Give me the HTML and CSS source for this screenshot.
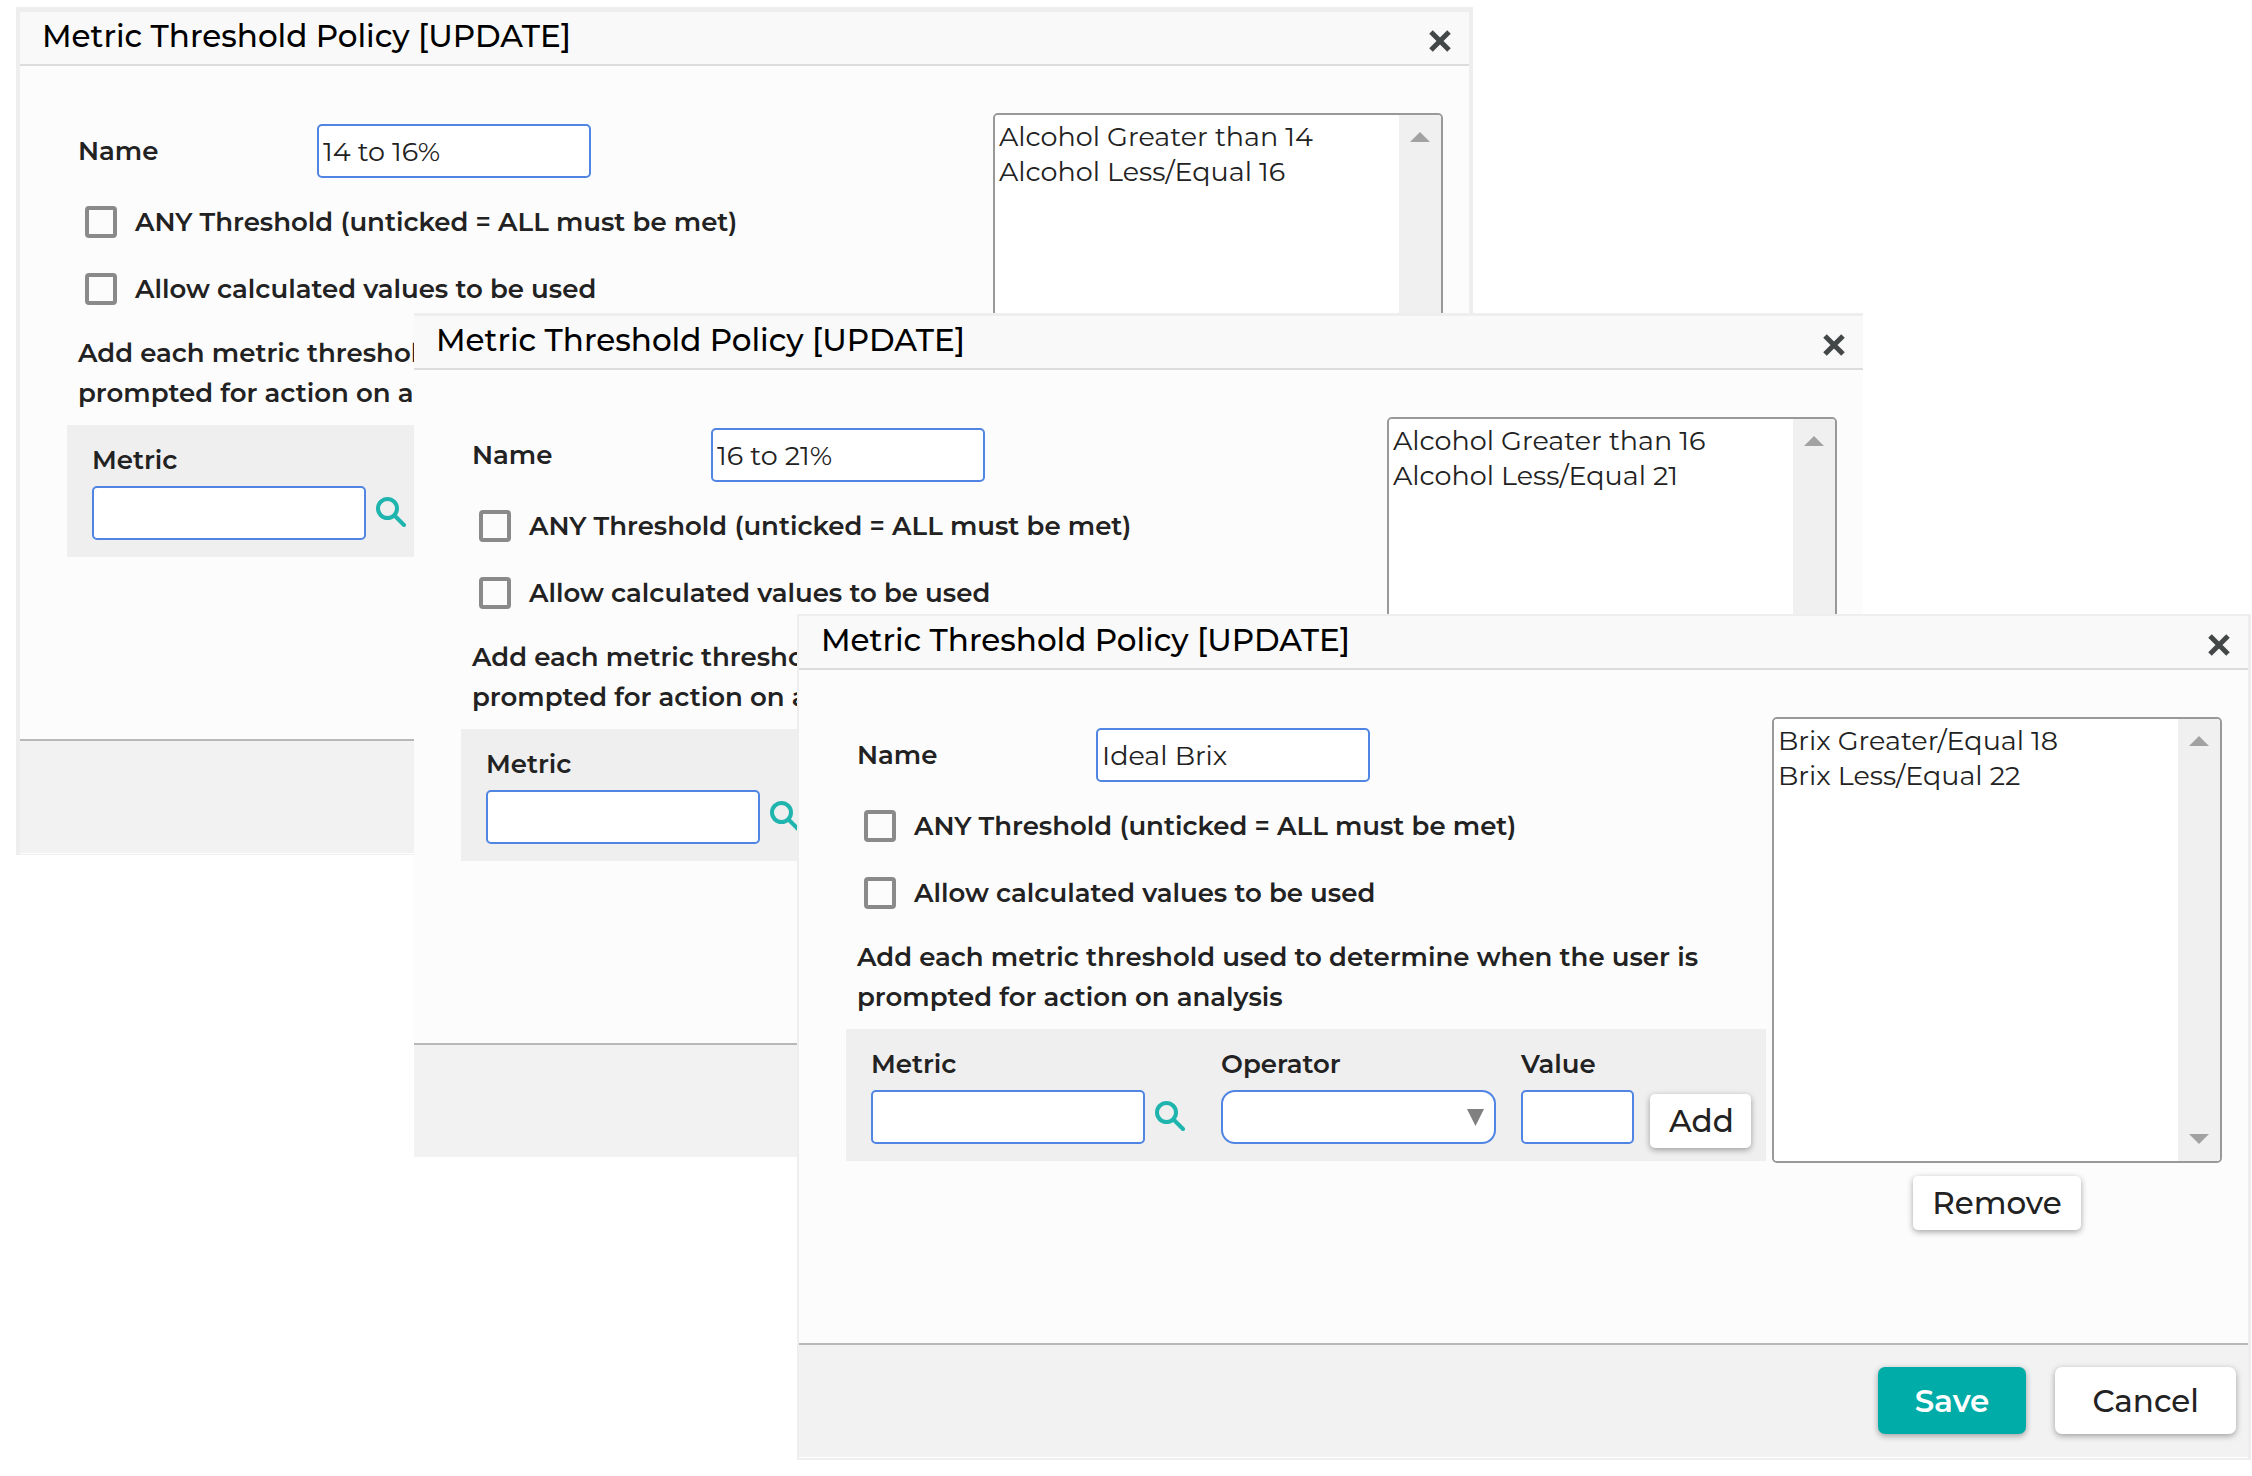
FILE: index.html
```html
<!DOCTYPE html>
<html lang="en">
<head>
  <meta charset="UTF-8" />
  <meta name="viewport" content="width=device-width, initial-scale=1.0" />
  <title>Metric Threshold Policy</title>
  <link rel="stylesheet" href="styles.css">
</head>
<body>

  <!-- Icons shared by the three dialogs -->
  <svg class="sprite" aria-hidden="true">
    <symbol id="icon-close" viewBox="0 0 24 24">
      <path d="M3 3L21 21M21 3L3 21" fill="none" stroke="#444747" stroke-width="5" />
    </symbol>
    <symbol id="icon-search" viewBox="0 0 30 30">
      <circle cx="11.5" cy="11.5" r="9.5" fill="none" stroke="#1fb5ae" stroke-width="4" />
      <path d="M19 19L28 28" stroke="#1fb5ae" stroke-width="4" stroke-linecap="round" />
    </symbol>
    <symbol id="icon-up" viewBox="0 0 20 10">
      <path d="M0 10L10 0L20 10Z" fill="#a2a2a2" />
    </symbol>
    <symbol id="icon-down" viewBox="0 0 20 10">
      <path d="M0 0L10 10L20 0Z" fill="#a2a2a2" />
    </symbol>
    <symbol id="icon-caret" viewBox="0 0 17 17">
      <path d="M0 0H17L8.5 17Z" fill="#808080" />
    </symbol>
  </svg>

  <form class="dialog dialog-one">
    <div class="dialog-header">
      <h2>Metric Threshold Policy [UPDATE]</h2>
      <button type="button" class="icon-btn close" aria-label="Close"><svg><use href="#icon-close" /></svg></button>
    </div>
    <div class="dialog-body">
      <div class="settings">
        <div class="name-row">
          <label for="name1">Name</label>
          <input type="text" id="name1" value="14 to 16%" />
        </div>
        <label class="check"><input type="checkbox" /> ANY Threshold (unticked = ALL must be met)</label>
        <label class="check"><input type="checkbox" /> Allow calculated values to be used</label>
        <p>Add each metric threshold used to determine when the user is prompted for action on analysis</p>
        <div class="panel">
          <div class="field metric">
            <label for="metric1">Metric</label>
            <div class="lookup">
              <input type="text" id="metric1" />
              <button type="button" class="icon-btn search" aria-label="Search"><svg><use href="#icon-search" /></svg></button>
            </div>
          </div>
          <div class="field operator">
            <label for="operator1">Operator</label>
            <div class="dropdown">
              <select id="operator1"><option></option></select>
              <svg><use href="#icon-caret" /></svg>
            </div>
          </div>
          <div class="field value">
            <label for="value1">Value</label>
            <input type="text" id="value1" />
          </div>
          <button type="button" class="btn">Add</button>
        </div>
      </div>
      <div class="thresholds">
        <div class="listbox">
          <select size="12" aria-label="Thresholds">
            <option>Alcohol Greater than 14</option>
            <option>Alcohol Less/Equal 16</option>
          </select>
          <div class="scrollbar"><svg><use href="#icon-up" /></svg><svg><use href="#icon-down" /></svg></div>
        </div>
        <button type="button" class="btn">Remove</button>
      </div>
    </div>
    <div class="dialog-footer">
      <button type="submit" class="btn large primary">Save</button>
      <button type="button" class="btn large">Cancel</button>
    </div>
  </form>

  <form class="dialog dialog-two">
    <div class="dialog-header">
      <h2>Metric Threshold Policy [UPDATE]</h2>
      <button type="button" class="icon-btn close" aria-label="Close"><svg><use href="#icon-close" /></svg></button>
    </div>
    <div class="dialog-body">
      <div class="settings">
        <div class="name-row">
          <label for="name2">Name</label>
          <input type="text" id="name2" value="16 to 21%" />
        </div>
        <label class="check"><input type="checkbox" /> ANY Threshold (unticked = ALL must be met)</label>
        <label class="check"><input type="checkbox" /> Allow calculated values to be used</label>
        <p>Add each metric threshold used to determine when the user is prompted for action on analysis</p>
        <div class="panel">
          <div class="field metric">
            <label for="metric2">Metric</label>
            <div class="lookup">
              <input type="text" id="metric2" />
              <button type="button" class="icon-btn search" aria-label="Search"><svg><use href="#icon-search" /></svg></button>
            </div>
          </div>
          <div class="field operator">
            <label for="operator2">Operator</label>
            <div class="dropdown">
              <select id="operator2"><option></option></select>
              <svg><use href="#icon-caret" /></svg>
            </div>
          </div>
          <div class="field value">
            <label for="value2">Value</label>
            <input type="text" id="value2" />
          </div>
          <button type="button" class="btn">Add</button>
        </div>
      </div>
      <div class="thresholds">
        <div class="listbox">
          <select size="12" aria-label="Thresholds">
            <option>Alcohol Greater than 16</option>
            <option>Alcohol Less/Equal 21</option>
          </select>
          <div class="scrollbar"><svg><use href="#icon-up" /></svg><svg><use href="#icon-down" /></svg></div>
        </div>
        <button type="button" class="btn">Remove</button>
      </div>
    </div>
    <div class="dialog-footer">
      <button type="submit" class="btn large primary">Save</button>
      <button type="button" class="btn large">Cancel</button>
    </div>
  </form>

  <form class="dialog dialog-three">
    <div class="dialog-header">
      <h2>Metric Threshold Policy [UPDATE]</h2>
      <button type="button" class="icon-btn close" aria-label="Close"><svg><use href="#icon-close" /></svg></button>
    </div>
    <div class="dialog-body">
      <div class="settings">
        <div class="name-row">
          <label for="name3">Name</label>
          <input type="text" id="name3" value="Ideal Brix" />
        </div>
        <label class="check"><input type="checkbox" /> ANY Threshold (unticked = ALL must be met)</label>
        <label class="check"><input type="checkbox" /> Allow calculated values to be used</label>
        <p>Add each metric threshold used to determine when the user is prompted for action on analysis</p>
        <div class="panel">
          <div class="field metric">
            <label for="metric3">Metric</label>
            <div class="lookup">
              <input type="text" id="metric3" />
              <button type="button" class="icon-btn search" aria-label="Search"><svg><use href="#icon-search" /></svg></button>
            </div>
          </div>
          <div class="field operator">
            <label for="operator3">Operator</label>
            <div class="dropdown">
              <select id="operator3"><option></option></select>
              <svg><use href="#icon-caret" /></svg>
            </div>
          </div>
          <div class="field value">
            <label for="value3">Value</label>
            <input type="text" id="value3" />
          </div>
          <button type="button" class="btn">Add</button>
        </div>
      </div>
      <div class="thresholds">
        <div class="listbox">
          <select size="12" aria-label="Thresholds">
            <option>Brix Greater/Equal 18</option>
            <option>Brix Less/Equal 22</option>
          </select>
          <div class="scrollbar"><svg><use href="#icon-up" /></svg><svg><use href="#icon-down" /></svg></div>
        </div>
        <button type="button" class="btn">Remove</button>
      </div>
    </div>
    <div class="dialog-footer">
      <button type="submit" class="btn large primary">Save</button>
      <button type="button" class="btn large">Cancel</button>
    </div>
  </form>

</body>
</html>
```

FILE: styles.css
```css
* {
  box-sizing: border-box;
}
body {
  margin: 0;
  background-color: #fff;
  color: #222;
  font-family: Montserrat, Inter, sans-serif;
  font-size: 26px;
  font-weight: 600;
}
input, select, button {
  font-family: inherit;
  font-size: 27px;
  color: inherit;
  margin: 0;
}
.sprite {
  display: none;
}

/* Overlapping windows */
.dialog {
  position: absolute;
  border: 0 solid #eee;
  background-color: #fff;
}
.dialog-one {
  top: 7px;
  left: 16px;
  right: 779px;
  border-width: 5px 4px 1px;
  padding-bottom: 1px;
}
.dialog-two {
  top: 313px;
  left: 414px;
  right: 389px;
  border-top-width: 3px;
}
.dialog-three {
  top: 614px;
  left: 797px;
  right: 1px;
  border-width: 2px 3px 2px 2px;
  padding-bottom: 1px;
}
.dialog-header {
  display: flex;
  align-items: center;
  justify-content: space-between;
  padding: 0 17px 0 22px;
  background-color: #f9f9f9;
  border-bottom: 2px solid #dcdcdc;
}
.dialog-header h2 {
  margin: 0;
  padding-bottom: 4px;
  color: #000;
  font-size: 31px;
  font-weight: 500;
  line-height: 48px;
}
.dialog-body {
  display: flex;
  gap: 6px;
  padding: 47px 26px 113px 47px;
  background-color: #fcfcfc;
}
.dialog-footer {
  display: flex;
  justify-content: flex-end;
  gap: 29px;
  padding: 22px 12px 23px;
  background-color: #f2f2f2;
  border-top: 2px solid #b8b8b8;
}

/* Left column */
.settings {
  flex: 1;
  padding-top: 11px;
}
.name-row {
  display: flex;
  align-items: center;
  padding-left: 11px;
  margin-bottom: 10px;
}
.name-row label {
  width: 239px;
}
input[type="text"] {
  width: 274px;
  height: 54px;
  padding: 0 4px;
  border: 2px solid #5085e4;
  border-radius: 5px;
  background-color: #fff;
}
.check {
  display: flex;
  align-items: center;
  gap: 18px;
  height: 67px;
  padding-left: 18px;
}
.check input {
  appearance: none;
  width: 32px;
  height: 32px;
  border: 4px solid #8a8a8a;
  border-radius: 4px;
}
.settings p {
  margin: 11px 11px 12px;
  line-height: 40px;
}
.panel {
  display: flex;
  align-items: flex-end;
  padding: 18px 15px 17px 25px;
  background-color: #efefef;
}
.panel .btn {
  width: 101px;
  margin-bottom: -4px;
}
.field label {
  display: block;
  margin-bottom: 9px;
  line-height: 34px;
}
.metric {
  flex: 1;
  margin-right: 36px;
}
.operator {
  width: 275px;
  margin-right: 25px;
}
.value {
  width: 113px;
  margin-right: 16px;
}
.field input[type="text"] {
  display: block;
  width: 100%;
}
.lookup {
  display: flex;
  gap: 10px;
}
.dropdown {
  position: relative;
}
.dropdown select {
  appearance: none;
  display: block;
  width: 100%;
  height: 54px;
  padding: 0 40px 0 10px;
  border: 2px solid #5085e4;
  border-radius: 14px;
  background-color: #fff;
}
.dropdown svg {
  position: absolute;
  top: 19px;
  right: 12px;
  width: 17px;
  height: 17px;
  pointer-events: none;
}

/* Right column */
.thresholds {
  display: flex;
  flex-direction: column;
  align-items: center;
  gap: 13px;
  width: 450px;
}
.listbox {
  display: flex;
  width: 100%;
  height: 446px;
  border: 2px solid #999;
  border-radius: 5px;
  background-color: #fff;
  overflow: hidden;
}
.listbox select {
  flex: 1;
  padding: 5px 0;
  border: none;
  background-color: #fff;
  overflow: hidden;
  font-weight: 500;
}
.listbox option {
  min-height: 35px;
  padding: 0 4px;
  line-height: 35px;
}
.scrollbar {
  display: flex;
  flex-direction: column;
  align-items: center;
  justify-content: space-between;
  width: 42px;
  padding: 17px 0;
  background-color: #f0f0f0;
}
.scrollbar svg {
  width: 20px;
  height: 10px;
}

/* Buttons */
.btn {
  height: 54px;
  padding: 0 19px;
  border: none;
  border-radius: 5px;
  background-color: #fff;
  box-shadow: 0 2px 6px rgba(0,0,0,0.35);
  font-size: 31px;
  font-weight: 500;
  cursor: pointer;
}
.btn.large {
  height: 67px;
  padding: 0 37px;
  border-radius: 7px;
}
.btn.primary {
  background-color: #00aca8;
  color: #fff;
  font-weight: 600;
}
.icon-btn {
  padding: 0;
  border: none;
  background: none;
  cursor: pointer;
}
.icon-btn svg {
  display: block;
  width: 100%;
  height: 100%;
}
.close {
  width: 24px;
  height: 30px;
  padding-top: 6px;
}
.search {
  flex: none;
  width: 30px;
  height: 30px;
  margin-top: 11px;
}
```
